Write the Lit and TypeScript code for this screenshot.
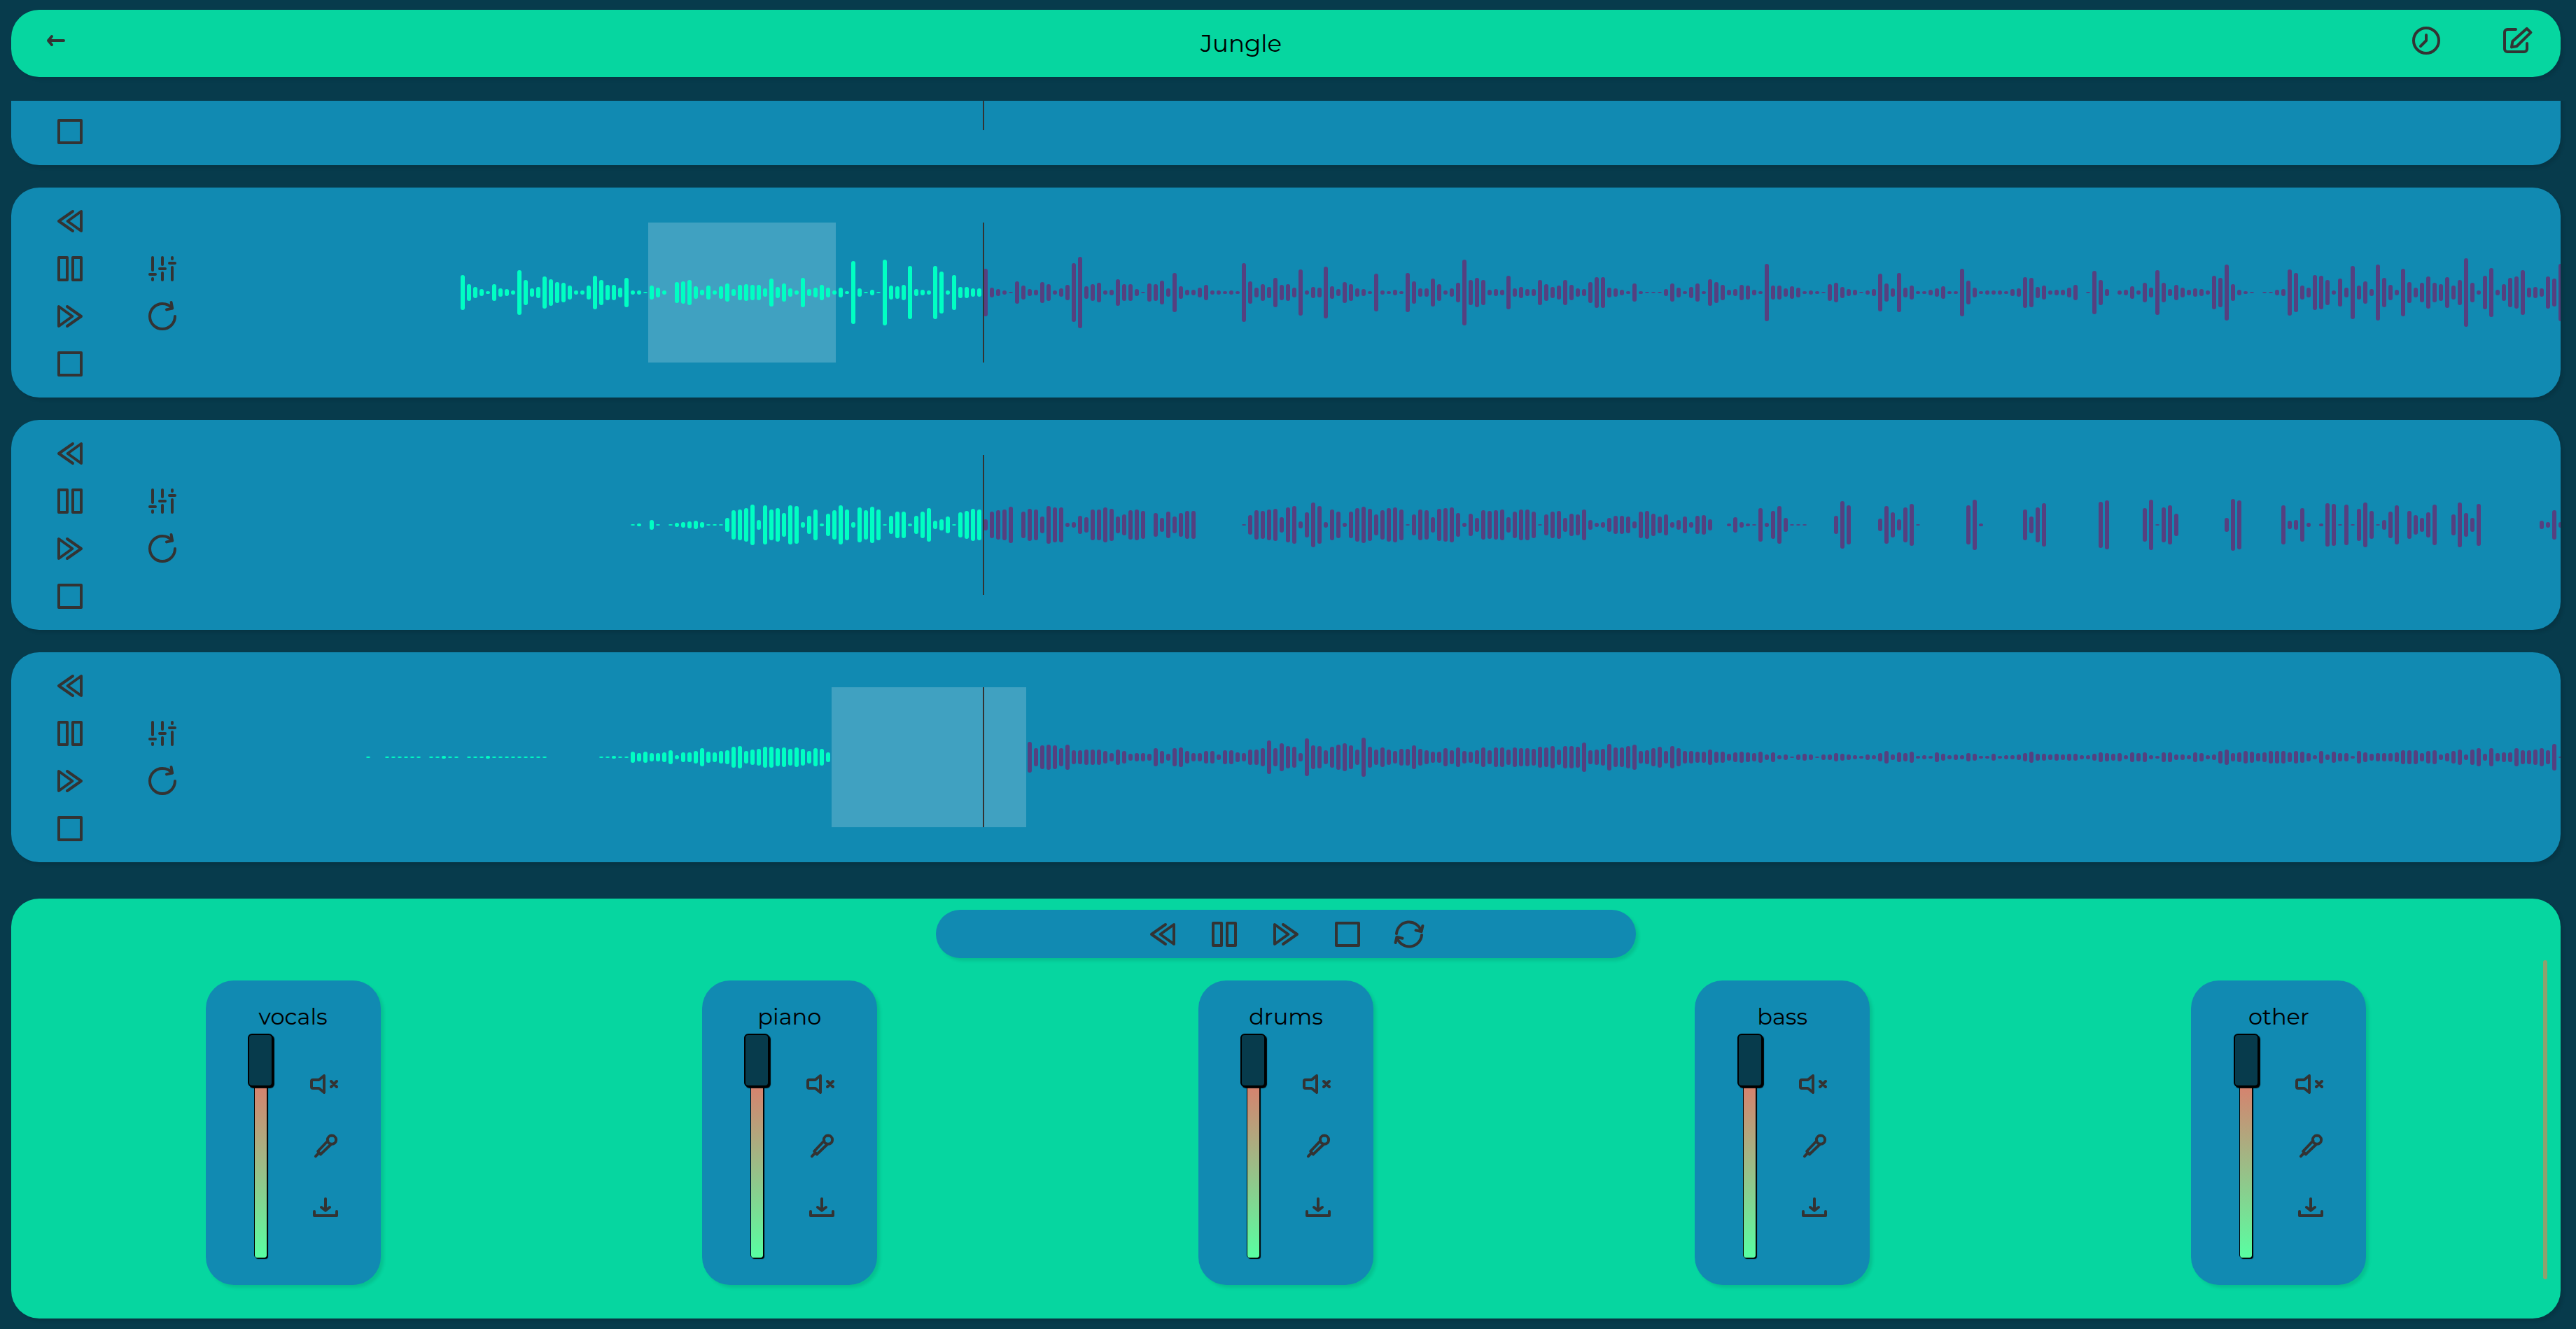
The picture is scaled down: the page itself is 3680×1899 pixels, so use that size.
import { LitElement, html, svg, css } from "lit";
import { customElement, property } from "lit/decorators.js";

/* Icon outlines on a 24 unit grid, drawn with a two unit round stroke. */
const icons: Record<string, string> = {
  back: "M17.5 12H6.5M9 9l-2.5 3L9 15",
  clock: "M12 3a9 9 0 1 0 0 18a9 9 0 0 0 0-18zM12 8v4l-4 4",
  edit: "M12 4H6a2 2 0 0 0-2 2v12a2 2 0 0 0 2 2h12a2 2 0 0 0 2-2v-4M9 16.7l.7-4.2L19.9 3.4l2.8 2.8L12.7 16z",
  rewind: "M14 5L4 12l10 7M20 5v14l-9.7-7z",
  pause: "M4 4h6v16H4zM14 4h6v16h-6z",
  forward: "M10 5l10 7-10 7M4 5v14l9.7-7z",
  stop: "M4 4h16v16H4z",
  sliders:
    "M5 4v9M3 16h4M5 19v1M12 4v5M10 12h4M12 15v5M19 4v1M17 8h4M19 11v9",
  reload: "M21 12a9 9 0 1 1-9-9c2.8 0 5.3 1.2 6.9 3.3M18.3 2l.8 4.3L15 7.2",
  sync: "M3 11.5A9 9 0 0 1 20.6 9.7M21.7 6l-.9 4-4-.9M21 12.5A9 9 0 0 1 3.4 14.3M2.3 18l.9-4 4 .9",
  mute: "M7.3 9H3a1 1 0 0 0-1 1v4a1 1 0 0 0 1 1h4.3L11 18V6zM16 10l4 4M20 10l-4 4",
  mic: "M16.5 4.8a3 3 0 1 0 0 6.1a3 3 0 0 0 0-6.1zM13.7 8.5L6.6 16l1.9 2.2L16 11M7.3 17.2L5 19.6",
  download: "M12 6v8M9 12l3 2.4 3-2.4M4 15v3h16v-3",
};

const icon = (name: string) =>
  svg`<svg class="icon" viewBox="0 0 24 24" aria-hidden="true"><path d=${icons[name]} /></svg>`;

const iconStyles = css`
  button {
    display: flex;
    align-items: center;
    justify-content: center;
    margin: 0;
    padding: 0;
    border: 0;
    background: none;
    cursor: pointer;
  }
  .icon {
    display: block;
    width: 48px;
    height: 48px;
    fill: none;
    stroke: #333;
    stroke-width: 2;
    stroke-linecap: round;
    stroke-linejoin: round;
    overflow: visible;
  }
`;

interface Track {
  name: string;
  /* Bars that lie before the playhead. */
  played: number;
  /* Peak of each bar in pixels; "_n" stands for n silent bars. */
  peaks: string;
  region?: { start: number; width: number };
}

const tracks: Track[] = [
  { name: "Track 1", played: 0, peaks: "" },
  {
    name: "Track 2",
    played: 83,
    region: { start: 628, width: 268 },
    peaks: `25 12 8 5 2 12 6 5 3 32 18 6 8 23 19 15 14 10 3 3 10 24 18 11 11 7 21 3 3 1 10 7 3 _1
      15 16 18 9 4 10 3 9 13 5 11 12 11 11 6 20 8 13 6 3 21 5 7 11 7 3 7 2 45 6 1 4 1 47 10 9
      11 38 5 4 3 38 30 3 25 8 8 6 6
      34 7 5 3 1 16 10 5 4 15 12 3 6 11 42 51 9 12 14 3 4 19 12 12 5 1 13 12 17 6 28 9 4 4 7 11
      3 3 2 3 2 42 16 7 12 8 21 11 12 7 33 3 8 7 37 9 5 15 12 6 5 2 27 3 2 4 2 28 16 6 6 20 12
      3 6 14 47 18 21 18 4 5 4 24 6 8 5 5 18 12 8 10 18 11 6 5 15 22 22 7 6 4 2 13 2 1 1 1 5 13
      7 2 8 13 2 19 15 11 4 5 11 10 4 2 41 10 10 6 9 7 2 3 2 1 12 14 8 5 4 1 3 5 27 13 6 28 7
      10 2 2 4 6 9 2 2 34 17 7 2 3 3 3 2 5 6 22 21 8 10 3 4 4 7 11 _1 1 31 18 5 _1 3 4 9 3 14 7
      32 14 5 11 7 4 6 5 3 24 21 40 12 4 2 1 _1 1 1 4 5 33 28 10 7 25 24 18 3 20 7 38 10 16 5 40
      21 11 4 34 15 7 14 23 14 12 22 10 18 49 14 3 24 35 4 12 21 23 32 7 8 6 23 20 41`,
  },
  {
    name: "Track 3",
    played: 56,
    peaks: `1 2 _1 7 1 _1 1 3 4 5 6 4 1 1 1 10 21 22 24 29 7 28 22 24 17 28 27 4 13 22 2 16 21 28
      22 4 25 21 26 22 1 13 19 19 2 13 19 24 6 8 12 1 18 20 23 22
      8 19 21 22 26 _1 19 23 22 12 27 25 25 3 4 13 11 22 22 25 23 12 15 21 22 20 _1 17 10 19 12
      17 20 20 _7 1 14 21 20 22 23 11 25 27 5 18 32 27 4 22 19 3 19 24 26 23 15 21 24 25
      22 1 15 22 21 11 23 24 25 17 3 16 10 21 20 21 22 11 19 22 22 19 1 15 19 20 10 16 15 22 7 3
      4 10 13 13 12 5 19 20 16 12 15 4 7 12 4 13 14 8 _2 2 11 4 2 1 24 3 20 27 10 1 1 1 _4 13 34
      28 _4 9 27 18 8 25 30 1 _7 28 36 2 _6 22 12 25 31 _8 33 35 _5 24 36 1 25 28 16 _7 10 37 35
      _6 28 6 7 24 3 _1 2 31 30 1 29 1 23 32 20 1 7 19 28 _1 20 14 10 18 29 _2 15 32 17 10 30 _9
      6 4 21 4`,
  },
  {
    name: "Track 4",
    played: 98,
    region: { start: 890, width: 278 },
    peaks: `1 _2 1 1 1 1 1 1 _1 1 1 2 1 1 _1 1 1 1 2 1 1 1 1 1 1 1 1 1 _8 1 1 2 1 1 8 6 8 6 6 7 10
      3 7 7 9 13 8 7 9 10 15 16 9 11 12 15 15 13 14 12 14 12 9 13 12 7 _31
      22 13 17 18 17 13 18 10 10 11 11 11 9 6 11 9 5 6 6 5 13 9 5 13 14 9 6 6 9 9 4 10 10 7 6 11
      11 13 24 13 20 16 15 6 27 17 16 10 15 18 20 17 11 28 15 11 14 11 9 12 12 17 12 10 8 8 13
      10 14 9 8 10 14 10 14 14 11 14 13 13 12 15 14 16 11 16 16 15 21 10 11 12 19 14 14 16 18 9
      10 13 15 9 16 13 9 9 8 8 11 8 8 5 7 8 7 6 8 4 7 3 4 1 4 5 4 1 4 4 6 5 4 3 2 4 3 6 9 4 7 6
      8 2 3 2 7 5 3 4 3 6 5 2 2 5 2 3 3 4 6 8 5 5 4 5 4 5 5 3 3 5 7 6 5 6 3 7 6 7 3 2 7 7 4 4 3
      7 6 3 4 9 11 6 7 9 8 6 7 9 9 9 7 9 8 6 3 9 4 8 6 6 2 9 7 5 6 6 6 7 10 10 10 6 9 10 4 6 9
      11 4 11 13 5 13 6 7 7 13 10 10 11 13 10 19 1`,
  },
];

const channels = ["vocals", "piano", "drums", "bass", "other"];

const PLAYHEAD = 1106;
const BAR_STEP = 9;
const BAR_WIDTH = 6;
const WAVE_MIDDLE = 100;

const parsePeaks = (text: string): number[] =>
  text
    .split(/\s+/)
    .filter(Boolean)
    .flatMap((t) =>
      t.startsWith("_") ? new Array(Number(t.slice(1))).fill(0) : [Number(t)],
    );

@customElement("track-row")
export class TrackRow extends LitElement {
  @property({ attribute: false }) track!: Track;

  static styles = [
    iconStyles,
    css`
      :host {
        display: flex;
        flex: none;
        align-items: center;
        height: 300px;
        box-sizing: border-box;
        padding-left: 18px;
        border-radius: 40px;
        background: #118ab2;
        box-shadow: 4px 4px 4px rgba(0, 0, 0, 0.1);
        overflow: hidden;
      }
      .controls {
        flex: none;
        width: 132px;
      }
      .controls button {
        width: 100%;
        height: 68px;
      }
      .wave {
        flex: 1;
        min-width: 0;
        width: 100%;
        height: 200px;
      }
      .region {
        fill: rgba(255, 255, 255, 0.2);
      }
      .played {
        fill: #00ffc3;
      }
      .ahead {
        fill: #554080;
      }
      .playhead {
        fill: #333;
      }
    `,
  ];

  render() {
    const { played, peaks, region, name } = this.track;
    const start = PLAYHEAD + 1 - played * BAR_STEP;
    return html`
      <div class="controls">
        <button aria-label="Rewind">${icon("rewind")}</button>
        <button aria-label="Pause">${icon("pause")}</button>
        <button aria-label="Forward">${icon("forward")}</button>
        <button aria-label="Stop">${icon("stop")}</button>
      </div>
      <div class="controls">
        <button aria-label="Equalizer">${icon("sliders")}</button>
        <button aria-label="Repeat">${icon("reload")}</button>
      </div>
      <svg class="wave" role="img" aria-label=${name}>
        ${region
          ? svg`<rect class="region" x=${region.start} y="0" width=${region.width} height="200" />`
          : null}
        ${parsePeaks(peaks).map((peak, i) =>
          peak
            ? svg`<rect
                class=${i < played ? "played" : "ahead"}
                x=${start + i * BAR_STEP}
                y=${WAVE_MIDDLE - peak}
                width=${BAR_WIDTH}
                height=${peak * 2}
                rx="3"
              />`
            : null,
        )}
        <rect class="playhead" x=${PLAYHEAD} y="0" width="2" height="200" />
      </svg>
    `;
  }
}

@customElement("channel-strip")
export class ChannelStrip extends LitElement {
  @property() name = "";

  static styles = [
    iconStyles,
    css`
      :host {
        display: flex;
        flex-direction: column;
        box-sizing: border-box;
        width: 250px;
        padding: 32px 0 39px;
        border-radius: 40px;
        background: #118ab2;
        box-shadow: 4px 4px 4px rgba(0, 0, 0, 0.1);
      }
      .label {
        font-size: 32px;
        line-height: 40px;
        text-align: center;
      }
      .body {
        display: flex;
        align-items: flex-start;
        padding: 4px 34px 0 69px;
      }
      .fader {
        appearance: none;
        writing-mode: vertical-lr;
        direction: rtl;
        box-sizing: border-box;
        width: 18px;
        height: 320px;
        margin: 0;
        border-left: 1px solid #000;
        border-radius: 4px;
        background: linear-gradient(#fd5c5e, #58ffa2);
        box-shadow: 2px 2px 1px #000;
      }
      .fader::-webkit-slider-thumb {
        appearance: none;
        box-sizing: border-box;
        width: 36px;
        height: 76px;
        border: 2px solid #000;
        border-radius: 6px;
        background: #073b4c;
        box-shadow: 2px 2px 1px #000;
      }
      .actions {
        flex: 1;
        display: flex;
        flex-direction: column;
        align-items: flex-end;
        padding-top: 28px;
      }
      .actions button {
        width: 90px;
        height: 88px;
      }
    `,
  ];

  render() {
    return html`
      <label class="label" for="fader">${this.name}</label>
      <div class="body">
        <input id="fader" class="fader" type="range" min="0" max="100" value="100" />
        <div class="actions">
          <button aria-label="Mute">${icon("mute")}</button>
          <button aria-label="Solo">${icon("mic")}</button>
          <button aria-label="Download">${icon("download")}</button>
        </div>
      </div>
    `;
  }
}

@customElement("app-root")
export class AppRoot extends LitElement {
  static styles = [
    iconStyles,
    css`
      :host {
        display: flex;
        flex-direction: column;
        box-sizing: border-box;
        height: 100vh;
        padding: 14px 22px 15px 16px;
        background: #073b4c;
        color: #000;
        font-family: Montserrat, Inter, sans-serif;
      }
      .header {
        flex: none;
        display: flex;
        align-items: center;
        justify-content: space-between;
        height: 96px;
        border-radius: 40px;
        background: #06d6a0;
        box-shadow: 4px 4px 4px rgba(0, 0, 0, 0.1);
      }
      .header button {
        width: 128px;
        height: 96px;
        padding-bottom: 8px;
      }
      .header-actions {
        display: flex;
      }
      .title {
        margin: 0;
        font-size: 34px;
        line-height: 40px;
        font-weight: 400;
      }
      /* The reversed column keeps the list scrolled to its newest track. */
      .tracks {
        flex: 1;
        min-height: 0;
        display: flex;
        flex-direction: column-reverse;
        margin: 34px -22px 20px 0;
        padding-right: 22px;
        overflow-y: auto;
        scrollbar-width: none;
      }
      .track-list {
        flex: none;
        display: flex;
        flex-direction: column;
        gap: 32px;
        padding-bottom: 32px;
      }
      .mixer {
        flex: none;
        position: relative;
        display: flex;
        flex-direction: column;
        align-items: center;
        gap: 32px;
        padding: 16px 48px 48px;
        border-radius: 40px;
        background: #06d6a0;
        box-shadow: 4px 4px 4px rgba(0, 0, 0, 0.1);
      }
      .transport {
        display: flex;
        justify-content: center;
        width: 1000px;
        max-width: 100%;
        border-radius: 40px;
        background: #118ab2;
        box-shadow: 4px 4px 4px rgba(0, 0, 0, 0.1);
      }
      .transport button {
        width: 88px;
        height: 69px;
      }
      .channels {
        display: flex;
        justify-content: space-around;
        align-self: stretch;
      }
      .scroll-thumb {
        position: absolute;
        top: 88px;
        right: 19px;
        bottom: 56px;
        width: 6px;
        border-radius: 3px;
        background: #90a06e;
      }
    `,
  ];

  render() {
    return html`
      <header class="header">
        <button aria-label="Back">${icon("back")}</button>
        <h1 class="title">Jungle</h1>
        <div class="header-actions">
          <button aria-label="History">${icon("clock")}</button>
          <button aria-label="Edit">${icon("edit")}</button>
        </div>
      </header>
      <main class="tracks">
        <div class="track-list">
          ${tracks.map((t) => html`<track-row .track=${t}></track-row>`)}
        </div>
      </main>
      <section class="mixer">
        <div class="transport">
          <button aria-label="Rewind all">${icon("rewind")}</button>
          <button aria-label="Pause all">${icon("pause")}</button>
          <button aria-label="Forward all">${icon("forward")}</button>
          <button aria-label="Stop all">${icon("stop")}</button>
          <button aria-label="Sync all">${icon("sync")}</button>
        </div>
        <div class="channels">
          ${channels.map((c) => html`<channel-strip name=${c}></channel-strip>`)}
        </div>
        <div class="scroll-thumb"></div>
      </section>
    `;
  }
}
